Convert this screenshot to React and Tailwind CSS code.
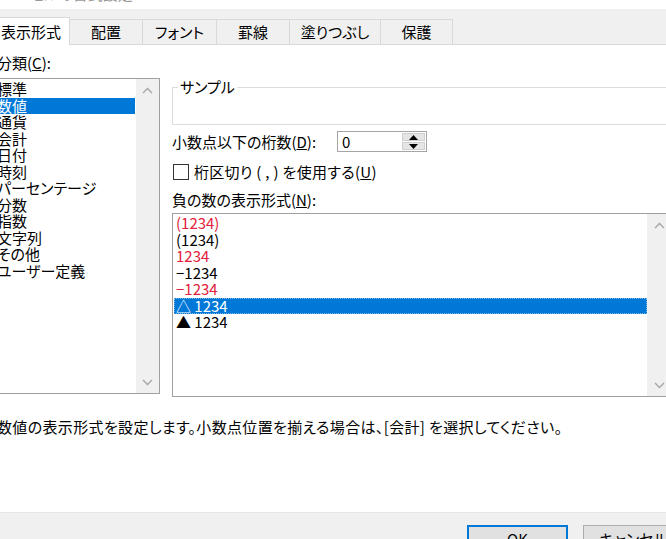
import React from "react";

const font = "font-['Noto_Sans_CJK_JP','Noto_Sans',sans-serif] [font-feature-settings:'palt']";

const categories = [
  "標準",
  "数値",
  "通貨",
  "会計",
  "日付",
  "時刻",
  "パーセンテージ",
  "分数",
  "指数",
  "文字列",
  "その他",
  "ユーザー定義",
];

const negatives = [
  { text: "(1234)", red: true },
  { text: "(1234)" },
  { text: "1234", red: true },
  { text: "−1234" },
  { text: "−1234", red: true },
  { text: "△ 1234", selected: true },
  { text: "▲ 1234" },
];

const Chevron = ({ down }) => (
  <svg width="11" height="7" viewBox="0 0 11 7" className="block">
    <polyline
      points={down ? "1,1 5.5,5.5 10,1" : "1,6 5.5,1.5 10,6"}
      fill="none"
      stroke="#a6a6a6"
      strokeWidth="1.4"
    />
  </svg>
);

const ScrollBar = ({ className }) => (
  <div className={`flex flex-col justify-between items-center bg-[#f0f0f0] ${className}`}>
    <div className="pt-[8px]">
      <Chevron />
    </div>
    <div className="pb-[7px]">
      <Chevron down />
    </div>
  </div>
);

const Tab = ({ label, w }) => (
  <div
    className={`${w} h-[25px] flex items-center justify-center bg-[#f0f0f0] border-t border-r border-[#d9d9d9] text-[15px] leading-[18px] text-black`}
  >
    {label}
  </div>
);

export default function App() {
  return (
    <div className={`w-[666px] h-[539px] bg-white overflow-hidden flex flex-col text-black ${font}`}>
      {/* title bar remnant */}
      <div className="h-[9px] overflow-hidden bg-white">
        <div className="-mt-[15px] ml-[30px] text-[15px] leading-[18px] text-[#9a9a9a]">
          セルの書式設定
        </div>
      </div>

      {/* tabs */}
      <div className="h-[36px] shrink-0 bg-[#f0f0f0] flex items-end border-b border-[#d9d9d9]">
        <div className="-ml-[8px] w-[78px] h-[28px] -mb-px bg-white border-t border-r border-[#d9d9d9] flex items-center justify-end pr-[8px] text-[15px] leading-[18px]">
          表示形式
        </div>
        <Tab label="配置" w="w-[73px]" />
        <Tab label="フォント" w="w-[74px]" />
        <Tab label="罫線" w="w-[73px]" />
        <Tab label="塗りつぶし" w="w-[91px]" />
        <Tab label="保護" w="w-[72px]" />
      </div>

      {/* body */}
      <div className="flex items-start">
        {/* left column */}
        <div className="-ml-[8px] w-[168px] shrink-0">
          <div className="mt-[9px] pl-[5px] text-[15px] leading-[18px]">
            分類(<span className="underline">C</span>):
          </div>
          <div className="mt-[6px] h-[316px] border border-[#a0a0a0] flex">
            <div className="w-[143px] pt-[2px]">
              {categories.map((c, i) => (
                <div
                  key={c}
                  className={`h-[16.5px] pl-[4px] text-[15px] leading-[16.5px] whitespace-nowrap ${
                    i === 1 ? "bg-[#0078d7] text-white" : ""
                  }`}
                >
                  {c}
                </div>
              ))}
            </div>
            <ScrollBar className="ml-px w-[23px]" />
          </div>
        </div>

        {/* right column */}
        <div className="ml-[12px] w-[500px] shrink-0">
          <fieldset className="mt-[33px] border border-[#dcdcdc] px-0">
            <legend className="ml-[5px] px-[2px] text-[15px] leading-[18px]">サンプル</legend>
            <div className="h-[28px]" />
          </fieldset>

          <div className="mt-[6px] flex items-center h-[21px]">
            <div className="w-[165px] text-[15px] leading-[18px] whitespace-nowrap">
              小数点以下の桁数(<span className="underline">D</span>):
            </div>
            <div className="w-[90px] h-[21px] border border-[#a5a5a5] flex items-stretch">
              <div className="flex-1 pl-[4px] text-[15px] leading-[19px]">0</div>
              <div className="w-[24px] flex flex-col py-px pr-px gap-px">
                <div className="flex-1 bg-[#e5e5e5] border border-[#cfcfcf] flex items-center justify-center">
                  <svg width="9" height="5" viewBox="0 0 9 5">
                    <polygon points="0,5 4.5,0 9,5" fill="#000" />
                  </svg>
                </div>
                <div className="flex-1 bg-[#e5e5e5] border border-[#cfcfcf] flex items-center justify-center">
                  <svg width="9" height="5" viewBox="0 0 9 5">
                    <polygon points="0,0 4.5,5 9,0" fill="#000" />
                  </svg>
                </div>
              </div>
            </div>
          </div>

          <div className="mt-[11px] flex items-center h-[18px] gap-[5px]">
            <div className="ml-px w-[16px] h-[16px] border border-[#333] bg-white" />
            <div className="text-[15px] leading-[18px] whitespace-nowrap tracking-[0.3px]">
              桁区切り ( , ) を使用する(<span className="underline">U</span>)
            </div>
          </div>

          <div className="mt-[10px] text-[15px] leading-[18px]">
            負の数の表示形式(<span className="underline">N</span>):
          </div>

          <div className="mt-[4px] h-[184px] border border-[#a0a0a0] flex">
            <div className="flex-1 pt-px pl-px">
              {negatives.map((n, i) => (
                <div
                  key={i}
                  className={`h-[16.5px] pl-[2px] text-[15px] leading-[16.5px] whitespace-nowrap ${
                    n.selected
                      ? "bg-[#0078d7] text-white outline-1 outline-dotted -outline-offset-1 outline-[#7fb6e6]"
                      : n.red
                      ? "text-[#e3203a]"
                      : "text-black"
                  }`}
                >
                  {n.text}
                </div>
              ))}
            </div>
            <ScrollBar className="w-[24px]" />
          </div>
        </div>
      </div>

      {/* description */}
      <div className="mt-[21px] -ml-[3px] text-[15px] leading-[18px] whitespace-nowrap tracking-[0.35px]">
        数値の表示形式を設定します。小数点位置を揃える場合は、[会計] を選択してください。
      </div>

      {/* button bar */}
      <div className="mt-auto h-[27px] shrink-0 bg-[#f0f0f0] border-t border-[#e6e6e6] flex items-start pl-[467px] pt-[12px] gap-[15px]">
        <button className="w-[101px] h-[28px] shrink-0 bg-[#e1e1e1] border-2 border-[#0078d7] text-[15px] leading-[22px] text-black">
          OK
        </button>
        <button className="w-[101px] h-[28px] shrink-0 bg-[#e1e1e1] border border-[#adadad] text-[15px] leading-[24px] text-black">
          キャンセル
        </button>
      </div>
    </div>
  );
}
